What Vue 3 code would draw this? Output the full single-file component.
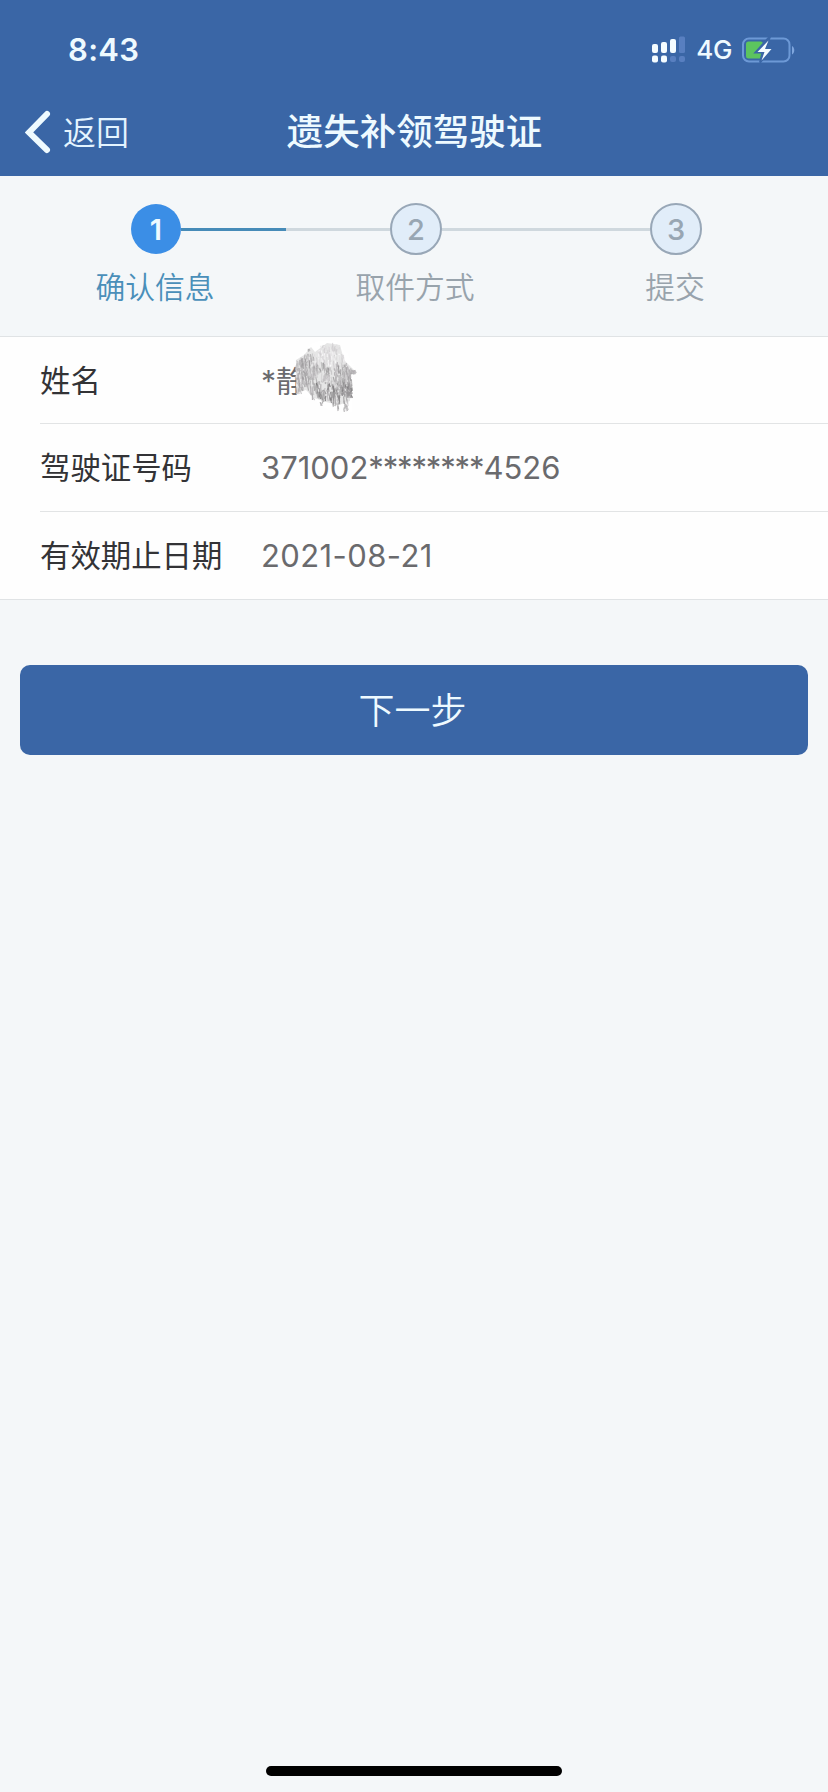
<template>
    <div class="page">
        <header class="header">
            <div class="status-bar">
                <span class="time">8:43</span>
                <div class="status-icons">
                    <svg class="signal" width="34" height="28" viewBox="0 0 34 28">
                        <g fill="#f4fcff">
                            <rect x="0" y="8" width="6" height="9" rx="2" />
                            <rect x="9" y="6" width="6" height="11" rx="2" />
                            <rect x="18" y="3" width="6" height="14" rx="2" />
                            <rect x="0" y="19.500" width="6" height="7" rx="2" />
                            <rect x="9" y="19.500" width="6" height="7" rx="2" />
                        </g>
                        <g fill="#587fc0">
                            <rect x="27" y="0.500" width="6" height="16.500" rx="1.500" />
                            <rect x="18" y="20" width="6" height="6" rx="2" />
                            <rect x="27" y="20" width="6" height="6" rx="2" />
                        </g>
                    </svg>
                    <span class="network">4G</span>
                    <svg class="battery" width="54" height="28" viewBox="0 0 54 28">
                        <rect x="1" y="2.500" width="46.500" height="23" rx="6" fill="none" stroke="#6d99d6" stroke-width="2" />
                        <path d="M50 10v8.500c3-1.500 3-7 0-8.500z" fill="#7fa6dd" />
                        <rect x="4" y="5.500" width="17" height="17" rx="2.500" fill="#5cc45f" />
                        <path d="M26.500 2 13.500 16.500h7l-2.500 10 12-14h-6.500l4-10.500z" fill="#3a66a6" stroke="#3a66a6" stroke-width="2" />
                        <path d="M26.500 4.500 15.500 16h7l-3 8.500L29.500 13h-6.500z" fill="#f4fcff" />
                    </svg>
                </div>
            </div>
            <div class="nav-bar">
                <button class="back">
                    <svg width="26" height="44" viewBox="0 0 26 44">
                        <path d="M22 4 4 22.500 22 40" fill="none" stroke="#eefaff" stroke-width="6" stroke-linecap="round" stroke-linejoin="miter" />
                    </svg>
                    <span>返回</span>
                </button>
                <h1 class="title">遗失补领驾驶证</h1>
            </div>
        </header>

        <ol class="steps">
            <li
                v-for="(step, index) in steps"
                :key="step"
                class="step"
                :class="{ active: index === current }"
            >
                <div class="step-track">
                    <i class="line" :class="{ hidden: index === 0 }"></i>
                    <span class="circle">{{ index + 1 }}</span>
                    <i class="line" :class="{ hidden: index === steps.length - 1 }"></i>
                </div>
                <span class="step-label">{{ step }}</span>
            </li>
        </ol>

        <section class="info">
            <div class="row">
                <span class="label">姓名</span>
                <span class="value name">
                    *静
                    <svg class="scribble" width="68" height="76" viewBox="0 0 68 76">
                        <path d="M4 17 14 10 18 4 28 1 45 1 56 14 65 31 61 39 60 72 50 70 36 70 22 60 4 54z" fill="#fff" />
                        <path d="M4 20 12 15 19 7 23 12 35 3 48 5 52 20 63 31 59 35 58 61 47 65 34 62 22 58 14 50 4 53z" fill="#dcdbdc" opacity=".7" />
                        <path
                            v-for="(stroke, i) in strokes"
                            :key="i"
                            :d="stroke.d"
                            :stroke="stroke.color"
                            fill="none"
                            stroke-width="1.200"
                        />
                    </svg>
                </span>
            </div>
            <div class="row">
                <span class="label">驾驶证号码</span>
                <span class="value">371002<span class="mask">********</span>4526</span>
            </div>
            <div class="row">
                <span class="label">有效期止日期</span>
                <span class="value date">2021-08-21</span>
            </div>
        </section>

        <button class="next"><span>下一步</span></button>
        <div class="home-indicator"></div>
    </div>
</template>

<script setup>
import { ref } from 'vue';

const steps = ['确认信息', '取件方式', '提交'];
const current = ref(0);

// Upper and lower edge of the pencil scribble, from left to right
const tops = [19, 17, 13, 8, 13, 9, 5, 3, 6, 2, 4, 11, 20, 28, 30];
const bottoms = [54, 51, 47, 55, 60, 59, 66, 61, 63, 67, 71, 64, 72, 58, 34];

let seed = 7;
const random = () => {
    seed = (seed * 16807) % 2147483647;
    return seed / 2147483647;
};

const strokes = [];
for (let i = 0; i < 520; i++) {
    const x = 4 + random() * 59;
    const slot = Math.min(14, Math.floor((x - 4) / 4));
    const top = tops[slot];
    const y = top + (bottoms[slot] - top) * random() * 0.95;
    const half = Math.min(bottoms[slot] - y, 2 + random() * 7) / 2;
    const dark = y > 42 && y < 58 && x > 24;
    const light = y < 22 && x > 22;
    const shade = Math.round((dark ? 115 : light ? 195 : 145) + random() * 65);
    strokes.push({
        d: `M${x.toFixed(1)} ${y.toFixed(1)}l${(random() * 2 - 1).toFixed(1)} ${half.toFixed(1)}l${random().toFixed(1)} ${half.toFixed(1)}`,
        color: `rgba(${shade}, ${shade - 2}, ${shade}, 0.7)`
    });
}
</script>

<style>
html,
body {
    background: #f4f7f9;
}
</style>

<style scoped>
.page {
    display: flex;
    flex-direction: column;
    width: 828px;
    height: 1792px;
    background: #f4f7f9;
    font-family: Inter, "Noto Sans CJK SC", sans-serif;
    overflow: hidden;
}

button {
    padding: 0;
    border: none;
    font-family: inherit;
}

.header {
    height: 176px;
    background: #3a66a6;
    color: #eefaff;
}

.status-bar {
    display: flex;
    align-items: center;
    justify-content: space-between;
    height: 88px;
    padding: 11px 32px 0 68px;
    box-sizing: border-box;
}

.time {
    font-size: 31px;
    font-weight: 600;
    letter-spacing: 0.3px;
}

.status-icons {
    display: flex;
    align-items: center;
}

.network {
    margin: 0 10px;
    font-size: 26px;
    font-weight: 500;
    letter-spacing: -0.4px;
}

.nav-bar {
    display: grid;
    grid-template-columns: 1fr auto 1fr;
    align-items: center;
    height: 88px;
}

.back {
    display: flex;
    align-items: center;
    gap: 12px;
    padding-left: 25px;
    background: none;
    color: #e4f4ff;
    font-size: 33px;
    font-weight: 350;
}

.back span {
    padding-bottom: 3px;
}

.title {
    margin: 0;
    padding-left: 1px;
    font-size: 36.5px;
    font-weight: 500;
    line-height: 50px;
}

.steps {
    display: flex;
    height: 160px;
    margin: 0;
    padding: 27px 22px 0 26px;
    box-sizing: border-box;
    list-style: none;
}

.step {
    flex: 1;
    text-align: center;
    color: #98a3ac;
}

.step-track {
    display: flex;
    align-items: center;
    height: 52px;
}

.line {
    flex: 1;
    height: 3px;
    background: #cfd8de;
}

.line.hidden {
    visibility: hidden;
}

.circle {
    width: 52px;
    height: 52px;
    box-sizing: border-box;
    border: 2px solid #98a7b7;
    border-radius: 50%;
    background: #e1edf9;
    color: #98a6b3;
    font-size: 29px;
    font-weight: 500;
    line-height: 50px;
}

.active .circle {
    width: 50px;
    height: 50px;
    border: none;
    background: #3b8ee6;
    color: #eefaff;
    font-weight: 600;
    line-height: 51px;
}

.active .line {
    background: #468bb8;
}

.step-label {
    display: block;
    margin: 10px 2px 0 0;
    font-size: 29.8px;
    font-weight: 350;
    line-height: 45px;
}

.active .step-label {
    color: #4a8fb9;
}

.info {
    border-top: 1px solid #e0e3e5;
    border-bottom: 1px solid #e0e3e5;
    background: #fefefe;
}

.row {
    display: flex;
    align-items: center;
    height: 87px;
    margin-left: 40px;
}

.row:first-child {
    height: 86px;
}

.row + .row {
    border-top: 1px solid #e2e4e5;
}

.label {
    width: 221px;
    padding-bottom: 3px;
    color: #333336;
    font-size: 30.4px;
}

.value {
    position: relative;
    color: #6a6a6d;
    font-size: 31px;
}

.mask {
    letter-spacing: -1.15px;
}

.date {
    letter-spacing: 0.4px;
}

.name {
    padding-bottom: 3px;
    font-size: 30px;
}

.scribble {
    position: absolute;
    left: 31px;
    top: -17px;
}

.next {
    height: 90px;
    margin: 65px 20px 0;
    border-radius: 10px;
    background: #3a66a6;
    color: #eefaff;
    font-size: 36px;
    font-weight: 350;
}

.next span {
    display: block;
    padding: 0 3px 4px 0;
}

.home-indicator {
    width: 296px;
    height: 10px;
    margin: auto auto 16px;
    border-radius: 5px;
    background: #000;
}
</style>
